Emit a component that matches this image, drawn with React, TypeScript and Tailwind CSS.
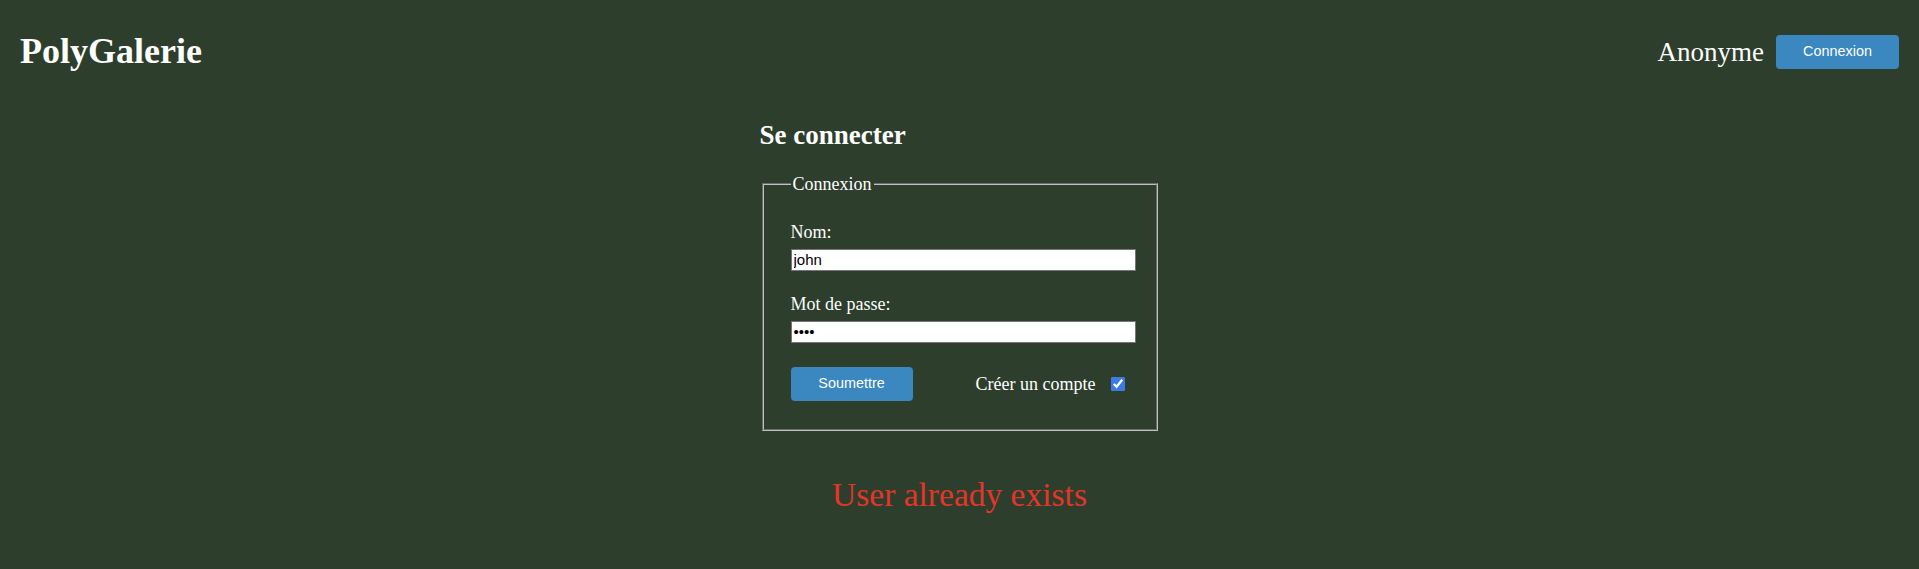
import React from "react";

export default function App() {
  return (
    <div className="min-h-screen bg-[#2d3e2c] text-white font-['Liberation_Serif',serif]">
      <header className="flex justify-between items-start px-5">
        <h1 className="mt-[31px] text-[36px] leading-[40px] font-bold">PolyGalerie</h1>
        <div className="mt-[35px] flex items-center gap-[12px]">
          <span className="text-[27px] leading-[34px]">Anonyme</span>
          <button className="w-[123px] h-[34px] rounded-[4px] bg-[#3b87c0] text-white text-[14.4px] font-['Liberation_Sans',Arial,sans-serif]">
            Connexion
          </button>
        </div>
      </header>

      <main className="w-[400px] mx-auto">
        <h2 className="mt-[48px] text-[27px] leading-[32px] font-bold">Se connecter</h2>
        <fieldset className="mt-[23px] mx-[2px] border-2 [border-style:groove] border-[#c0c0c0] pl-[27px] pr-[19px] pt-[28px] pb-[27.5px]">
          <legend className="px-[2px] text-[18px] leading-[20px]">Connexion</legend>
          <div>
            <label className="block text-[18px] leading-[21px]">Nom:</label>
            <input
              type="text"
              readOnly
              defaultValue="john"
              className="block mt-[6px] h-[22px] w-[345px] border border-[#767676] bg-white px-[2px] text-[15px] text-black font-['Liberation_Sans',Arial,sans-serif] outline-none"
            />
          </div>
          <div className="mt-[23px]">
            <label className="block text-[18px] leading-[21px]">Mot de passe:</label>
            <input
              type="password"
              readOnly
              defaultValue="john"
              className="block mt-[6px] h-[22px] w-[345px] border border-[#767676] bg-white px-[2px] text-[15px] text-black font-['Liberation_Sans',Arial,sans-serif] outline-none"
            />
          </div>
          <div className="mt-[24px] flex items-center w-[345px]">
            <button className="w-[122px] h-[34px] rounded-[4px] bg-[#3b87c0] text-white text-[14.4px] font-['Liberation_Sans',Arial,sans-serif]">
              Soumettre
            </button>
            <label className="ml-auto mr-[11px] flex items-center gap-[15px] text-[18px] leading-[21px]">
              <span>Créer un compte</span>
              <input type="checkbox" defaultChecked className="m-0 w-[14px] h-[14px] accent-[#3b7be8]" />
            </label>
          </div>
        </fieldset>
        <p className="mt-[45px] text-center text-[33.5px] leading-[38px] text-[#e4352a]">User already exists</p>
      </main>
    </div>
  );
}
